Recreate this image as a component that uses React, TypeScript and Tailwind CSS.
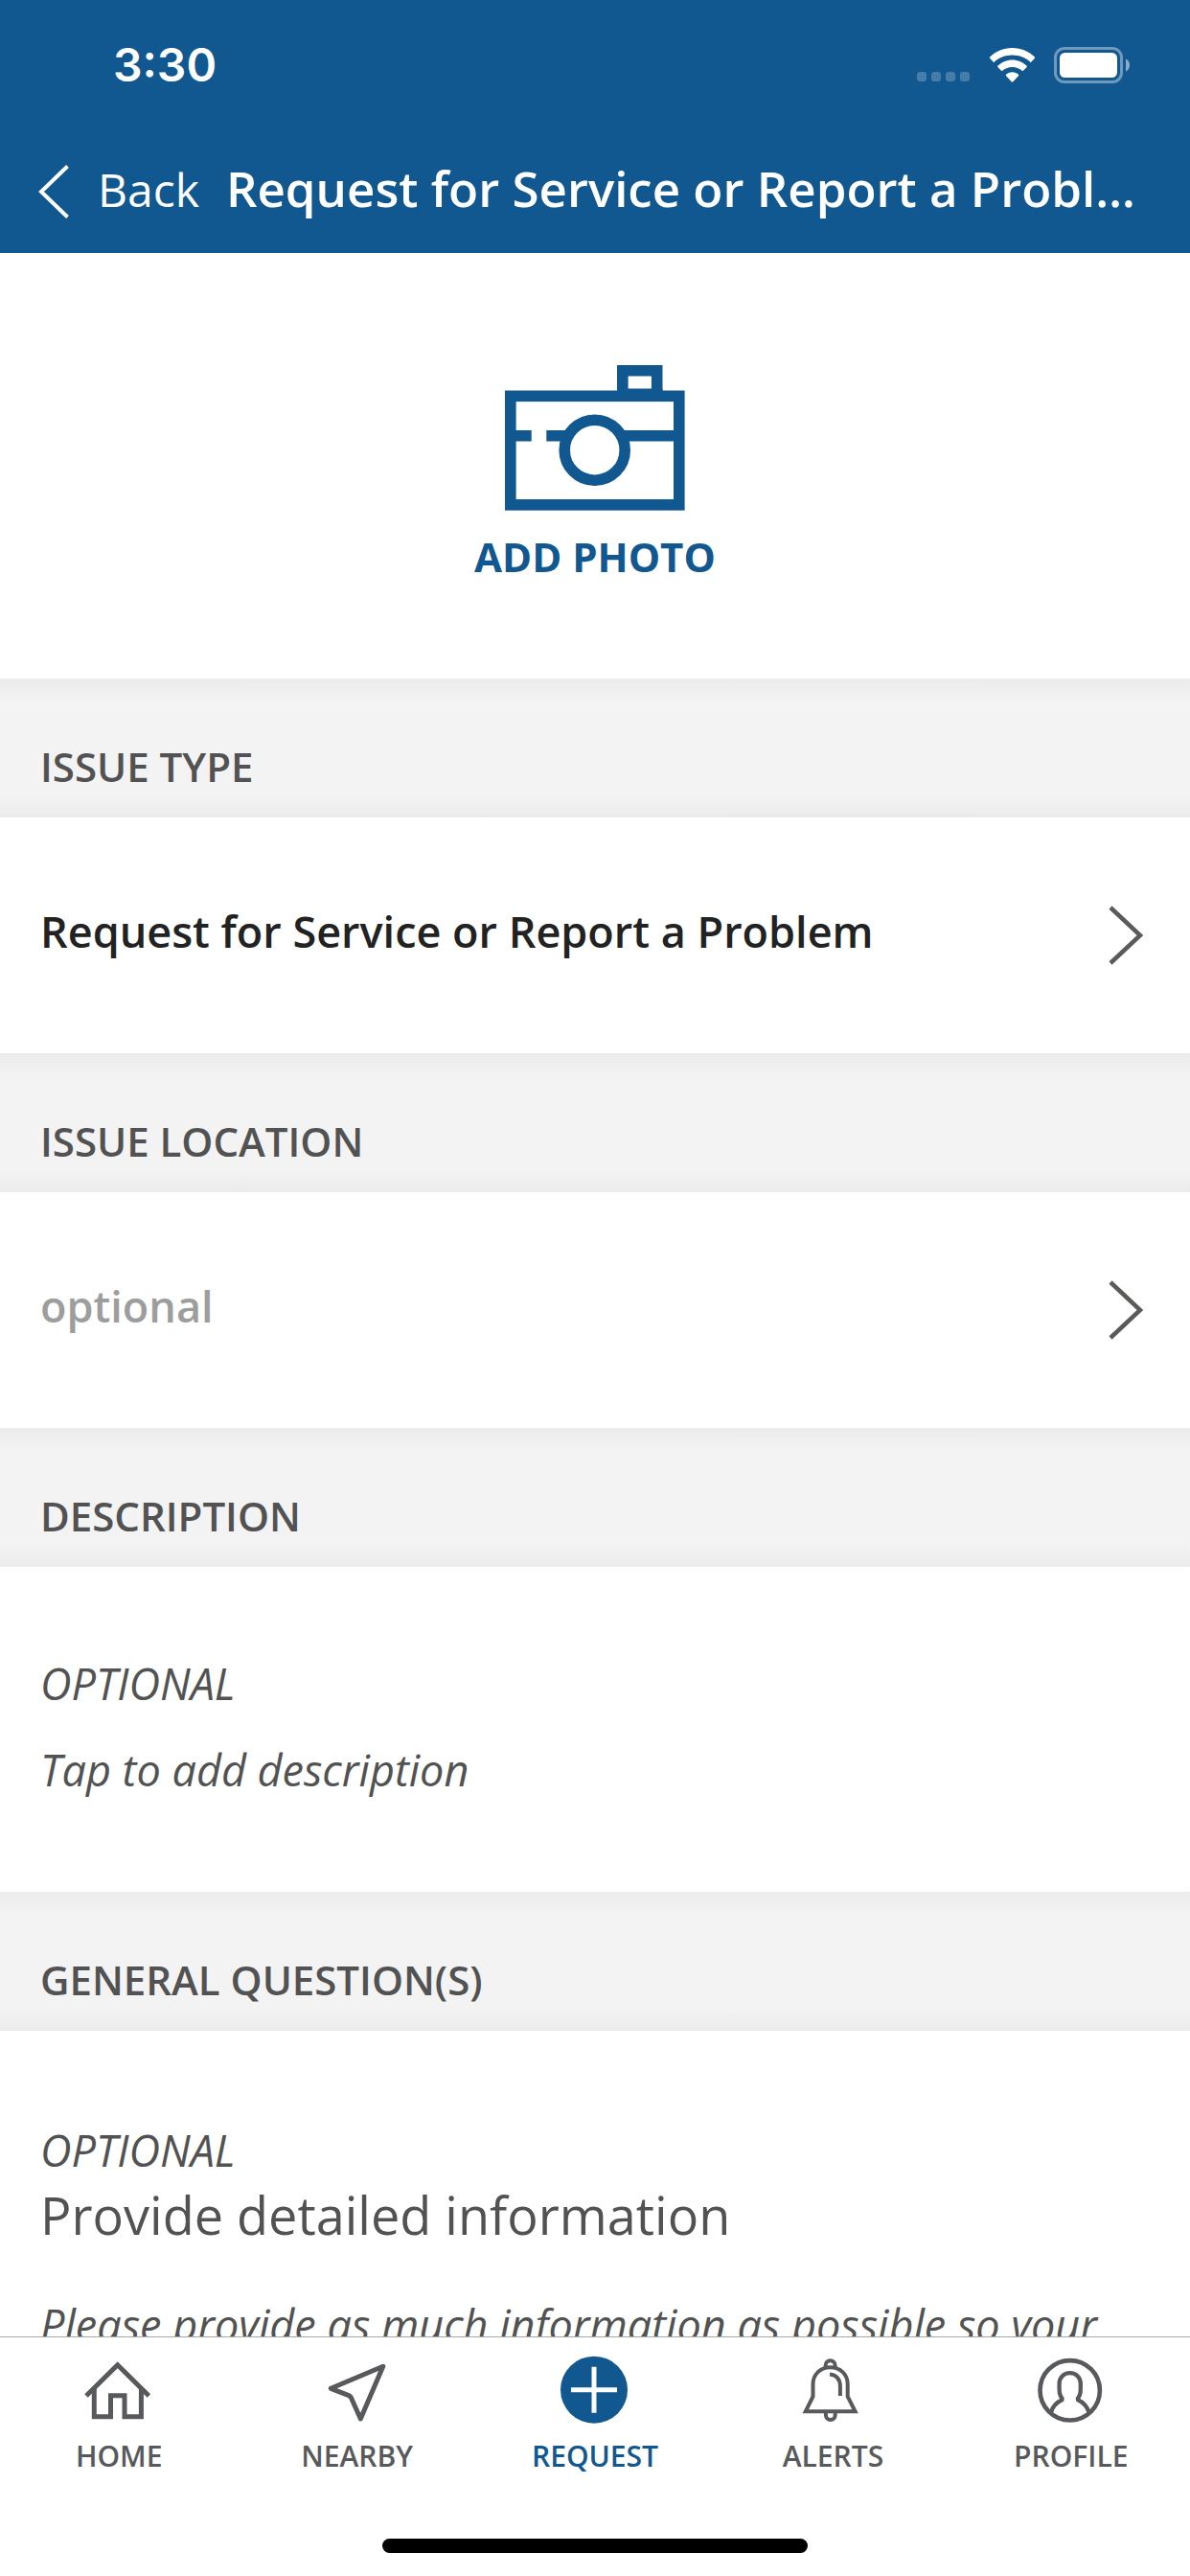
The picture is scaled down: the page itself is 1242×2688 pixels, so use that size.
import { ReactNode, useState } from "react";

const StatusBar = () => (
  <div className="flex items-center justify-between h-[132px] pt-1 pl-[118px] pr-[62px]">
    <span className="font-['Inter',sans-serif] font-semibold text-[48px] leading-[60px]">
      3:30
    </span>
    <div className="flex items-center gap-5">
      <svg width="56" height="38" viewBox="0 0 56 38" fill="#fff" opacity="0.22">
        <rect x="0" y="26" width="10" height="10" rx="3" />
        <rect x="15" y="26" width="10" height="10" rx="3" />
        <rect x="30" y="26" width="10" height="10" rx="3" />
        <rect x="45" y="26" width="10" height="10" rx="3" />
      </svg>
      <svg width="47" height="38" viewBox="0 0 47 38" fill="#fff">
        <path d="M23.5 1C32.6 1 41 4.600 47 10.600L46.800 12L42.700 16.200C37.600 11.300 31 8.600 23.500 8.600C16 8.600 9.400 11.300 4.300 16.200L0.200 12L0 10.600C6 4.600 14.400 1 23.500 1Z" />
        <path d="M23.500 13.500C29.300 13.500 34.700 15.800 38.700 19.800V21L34.400 25.200C31.500 22.500 27.700 20.900 23.500 20.900C19.300 20.900 15.500 22.500 12.600 25.200L8.300 21V19.800C12.300 15.800 17.700 13.500 23.500 13.500Z" />
        <path d="M23.500 26.200C26 26.200 28.300 27.100 30.100 28.700V30L24.300 36.200C23.800 36.700 23.200 36.700 22.700 36.200L16.900 30V28.700C18.700 27.100 21 26.200 23.500 26.200Z" />
      </svg>
      <svg width="80" height="38" viewBox="0 0 80 38" fill="none">
        <rect x="1.500" y="1.500" width="69" height="35" rx="9.500" stroke="#fff" strokeOpacity="0.4" strokeWidth="3" />
        <rect x="6" y="6" width="60" height="26" rx="5.500" fill="#fff" />
        <path d="M75 12.500C77.500 13.500 79 16 79 19C79 22 77.500 24.500 75 25.500Z" fill="#fff" fillOpacity="0.5" />
      </svg>
    </div>
  </div>
);

const ChevronRight = () => (
  <svg className="shrink-0" width="36" height="62" viewBox="0 0 36 62" fill="none">
    <path d="M2 2L33 31L2 60" stroke="#5b5a58" strokeWidth="4.500" />
  </svg>
);

const SectionTitle = ({ children }: { children: ReactNode }) => (
  <h2 className="px-[42px] pt-16 pb-[25px] text-[42px] leading-[56px] font-semibold text-[#525252] bg-[linear-gradient(to_bottom,#ebebeb,#f3f3f3_23px,#f3f3f3_calc(100%-23px),#ebebeb)]">
    {children}
  </h2>
);

const LinkRow = ({ text, muted }: { text: string; muted?: boolean }) => (
  <button
    type="button"
    className="flex items-center justify-between w-full pl-[42px] pr-[49px] py-[87px] text-left"
  >
    <span
      className={
        muted
          ? "pb-2 text-[45px] leading-[64px] font-semibold text-[#9d9d9d]"
          : "pb-2 text-[45px] leading-[64px] font-semibold text-[#222222]"
      }
    >
      {text}
    </span>
    <ChevronRight />
  </button>
);

const tabs = [
  {
    label: "HOME",
    icon: (
      <>
        <path d="M2 42L34.700 9.700L67.400 42" />
        <path d="M10.300 34V63.700H27.500V41.700H42V63.700H59.400V34" />
      </>
    ),
  },
  {
    label: "NEARBY",
    icon: (
      <path
        d="M62.800 11.200L8.300 34.300L27 41.600Q28.800 42.400 29.600 44.200L39.300 66Z"
        strokeLinejoin="round"
      />
    ),
  },
  {
    label: "REQUEST",
    active: true,
    icon: (
      <>
        <circle cx="35" cy="35.700" r="35" fill="currentColor" stroke="none" />
        <path d="M35 11.700V59.700M11 35.700H59" stroke="#fff" />
      </>
    ),
  },
  {
    label: "ALERTS",
    icon: (
      <g strokeWidth="4">
        <path d="M7.700 58.300L15.500 42.700V30C15.500 19.500 23.500 12.200 33.600 12.200C43.700 12.200 51.700 19.500 51.700 30V42.700L59.600 58.300Z" />
        <path d="M28.600 12V10A5 4.800 0 0 1 38.600 10V12" />
        <path d="M28.900 58.300V62A4.900 5 0 0 0 38.700 62V58.300" />
        <path d="M33 19.500C39.500 20 43.900 24.500 43.900 32V42" />
      </g>
    ),
  },
  {
    label: "PROFILE",
    icon: (
      <>
        <circle cx="34.700" cy="36.300" r="31.200" strokeWidth="4.600" />
        <path
          d="M14.700 59.700C16.500 53 21 48.500 27.300 45.700C24.500 43 23.600 39.500 23.600 35V29.500C23.600 22.500 28.500 18.200 34.700 18.200C40.900 18.200 45.800 22.500 45.800 29.500V35C45.800 39.500 44.900 43 42.100 45.700C48.400 48.500 52.900 53 54.700 59.700"
          strokeWidth="4.300"
          strokeLinejoin="bevel"
        />
      </>
    ),
  },
];

const TabBar = () => (
  <nav className="shrink-0 bg-white border-t border-[#a8a8a8]">
    <div className="grid grid-cols-5 pt-[19px]">
      {tabs.map(({ label, icon, active }) => (
        <a
          key={label}
          href={`#${label.toLowerCase()}`}
          className={
            active
              ? "flex flex-col items-center gap-3 text-[#115790]"
              : "flex flex-col items-center gap-3 text-[#58595c]"
          }
        >
          <svg width="72" height="72" viewBox="0 0 72 72" fill="none" stroke="currentColor" strokeWidth="5">
            {icon}
          </svg>
          <span className="text-[30px] leading-[42px] font-semibold">{label}</span>
        </a>
      ))}
    </div>
    <div className="flex justify-center pt-[65px] pb-6">
      <div className="w-[444px] h-[15px] rounded-full bg-black" />
    </div>
  </nav>
);

const App = () => {
  const [description, setDescription] = useState<string>("");

  return (
    <div className="flex flex-col h-screen overflow-hidden bg-white font-['Open_Sans','Noto_Sans',sans-serif]">
      <header className="shrink-0 bg-[#115790] text-white">
        <StatusBar />
        <div className="flex items-center h-[132px] pl-10 pr-[50px]">
          <button type="button" className="flex items-center shrink-0 gap-[30px] pt-1">
            <svg width="32" height="56" viewBox="0 0 32 56" fill="none">
              <path d="M30.500 1.500L3 28L30.500 54.500" stroke="#fff" strokeWidth="4" />
            </svg>
            <span className="pb-1 text-[48px] leading-[64px]">Back</span>
          </button>
          <h1 className="pb-1 ml-7 text-[51px] leading-[72px] font-semibold truncate">
            Request for Service or Report a Problem
          </h1>
        </div>
      </header>

      <main className="flex-1 min-h-0 overflow-hidden">
        <button
          type="button"
          className="flex flex-col items-center w-full gap-5 pt-[117px] pb-[99px] text-[#115790]"
        >
          <svg width="188" height="152" viewBox="0 0 188 152" fill="none" stroke="currentColor" strokeWidth="11.600">
            <rect x="5.800" y="32.300" width="176" height="113.500" />
            <path d="M122.800 27V5.800H158.700V27" />
            <path d="M117 26.500H164.500" strokeWidth="4" />
            <path d="M11 73.700H27.700M43.300 73.700H64M122 73.700H176" />
            <circle cx="93.700" cy="88.700" r="31.500" />
          </svg>
          <span className="text-[42px] leading-[56px] font-bold">ADD PHOTO</span>
        </button>

        <SectionTitle>ISSUE TYPE</SectionTitle>
        <LinkRow text="Request for Service or Report a Problem" />

        <SectionTitle>ISSUE LOCATION</SectionTitle>
        <LinkRow text="optional" muted />

        <SectionTitle>DESCRIPTION</SectionTitle>
        <div className="flex flex-col gap-[26px] px-[42px] pt-[90px] pb-[95px] text-[45px] leading-[64px] italic text-[#525252]">
          <label htmlFor="description">OPTIONAL</label>
          <input
            id="description"
            type="text"
            value={description}
            onChange={(e) => setDescription(e.target.value)}
            placeholder="Tap to add description"
            className="w-full h-16 italic outline-none placeholder:text-[#525252]"
          />
        </div>

        <SectionTitle>GENERAL QUESTION(S)</SectionTitle>
        <div className="px-[42px] pt-[93px] text-[45px] leading-[64px] text-[#525252]">
          <p className="italic">OPTIONAL</p>
          <p className="text-[54px] leading-[70px]">Provide detailed information</p>
          <p className="mt-12 italic">
            Please provide as much information as possible so your
          </p>
        </div>
      </main>

      <TabBar />
    </div>
  );
};

export default App;
